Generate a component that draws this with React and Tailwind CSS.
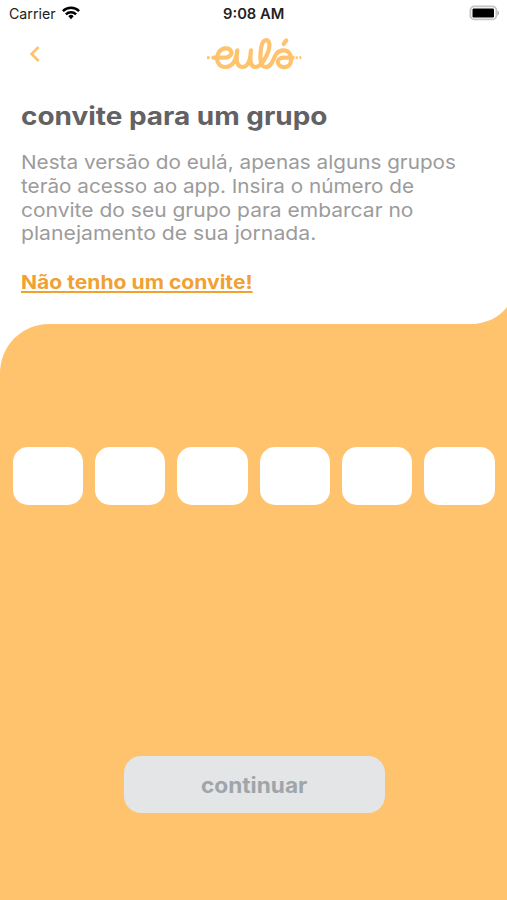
import { useLayoutEffect, useRef, useState } from "react";

// Stretches one line of text to the given width.
function Line({ width, className = "", children }) {
  const ref = useRef(null);
  const [scale, setScale] = useState(1);
  useLayoutEffect(() => {
    setScale(width / ref.current.offsetWidth);
  }, [width]);
  return (
    <span className="block" style={{ width }}>
      <span
        ref={ref}
        className={`inline-block origin-left whitespace-nowrap ${className}`}
        style={{ transform: `scaleX(${scale})` }}
      >
        {children}
      </span>
    </span>
  );
}

function StatusBar() {
  return (
    <div className="grid h-7 grid-cols-3 items-center pr-[7px] pl-[9px] text-[14.5px] leading-none text-[#222]">
      <div className="flex items-center gap-[6px]">
        <Line width={47}>Carrier</Line>
        <svg className="-mt-[2px]" width="18" height="14" viewBox="0 0 18 14" fill="none" stroke="#000" strokeWidth="2.5">
          <path d="M.9 5.1a11.5 11.5 0 0 1 16.2 0" />
          <path d="M3.9 8.3a7.2 7.2 0 0 1 10.2 0" />
          <path d="M6.3 10.2a3.8 3.8 0 0 1 5.4 0L9 13.3Z" fill="#000" stroke="none" />
        </svg>
      </div>
      <div className="flex justify-center pr-[2px] font-semibold">
        <Line width={61}>9:08 AM</Line>
      </div>
      <svg className="-mt-[2px] justify-self-end" width="31" height="16" viewBox="0 0 31 16">
        <rect x="1.4" y="1.4" width="26" height="13" rx="4" fill="#fff" stroke="#c4c4c4" strokeWidth="1.8" />
        <rect x="3.5" y="3.6" width="21.5" height="8.8" rx="1.2" fill="#000" />
        <path d="M28.4 5.6c2.4.8 2.4 4.2 0 5Z" fill="#b5b5b5" />
      </svg>
    </div>
  );
}

function Logo() {
  return (
    <svg width="100" height="40" viewBox="24 102 300 120" fill="none" stroke="#ffc36e" strokeWidth="12.5" strokeLinecap="round" strokeLinejoin="round">
      <path d="M55 173H88C105 173 113 162 107 152C100 141 80 143 71 158C60 177 69 201 91 201C108 201 123 188 127 151C122 182 126 201 142 201C159 201 166 181 168 151C164 182 166 201 181 201C200 201 226 155 223 131C220 114 203 117 199 140C194 171 194 201 212 201C231 201 233 178 243 163C252 149 274 147 283 159C289 167 289 179 287 188C283 205 259 205 251 193C243 180 254 173 268 173H293" />
      <path d="M266 132L274 121" />
      <g strokeWidth="8" strokeLinecap="butt">
        <path d="M36 173h8M302 173h6M313 173h6" />
      </g>
    </svg>
  );
}

export default function App() {
  return (
    <div className="flex h-[900px] w-[507px] flex-col overflow-hidden bg-white font-['Inter','Liberation_Sans',sans-serif]">
      <StatusBar />
      <header className="grid h-[52px] grid-cols-3 items-center">
        <button className="ml-[28px] w-3" aria-label="Voltar">
          <svg width="12" height="18" viewBox="0 0 12 18" fill="none" stroke="#ffc36e" strokeWidth="2.6">
            <path d="M10.6 2L3.6 9l7 7" />
          </svg>
        </button>
        <div className="flex justify-center pr-[2px]">
          <Logo />
        </div>
      </header>
      <section className="h-[243.5px] pl-[21px]">
        <h1 className="mt-5 h-8 text-[25px] leading-8 font-bold text-[#626163]">
          <Line width={306}>convite para um grupo</Line>
        </h1>
        <p className="mt-[19px] text-[19.2px] leading-[23.8px] text-[#9c9b9c]">
          <Line width={435}>Nesta versão do eulá, apenas alguns grupos</Line>
          <Line width={393}>terão acesso ao app. Insira o número de</Line>
          <Line width={392}>convite do seu grupo para embarcar no</Line>
          <Line width={295}>planejamento de sua jornada.</Line>
        </p>
        <a href="#" className="mt-[25px] block text-[19px] leading-6 font-bold text-[#f0a132]">
          <Line width={232} className="underline decoration-[1.5px] underline-offset-[1.5px]">
            Não tenho um convite!
          </Line>
        </a>
      </section>
      <main className="relative flex flex-1 flex-col items-center rounded-tl-[49px] bg-[#ffc36e]">
        <svg className="absolute -top-[17px] right-0" width="36" height="18" viewBox="0 0 36 18" fill="#ffc36e">
          <path d="M0 17.2C15 16.8 28 10.5 36 0v18H0Z" />
        </svg>
        <div className="mt-[123.5px] grid w-[482px] grid-cols-6 gap-3">
          {[0, 1, 2, 3, 4, 5].map((i) => (
            <input key={i} className="h-[58px] w-full rounded-[15px] bg-white" maxLength={1} />
          ))}
        </div>
        <button className="mt-[251px] ml-[1px] flex h-[57px] w-[261px] items-center justify-center rounded-[17px] bg-[#e3e5e6] pt-[3px] text-left text-[20.5px] font-bold text-[#9fa5a9]">
          <Line width={106}>continuar</Line>
        </button>
      </main>
    </div>
  );
}
